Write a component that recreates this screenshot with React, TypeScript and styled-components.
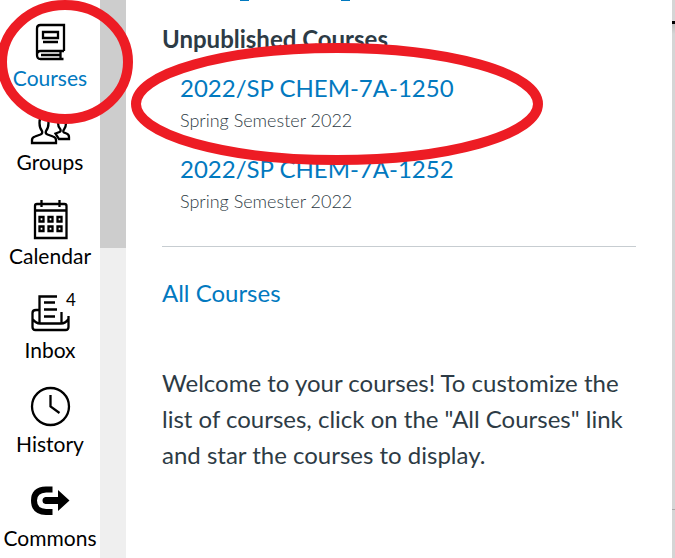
import React from "react";
import styled, { createGlobalStyle } from "styled-components";

const GlobalStyle = createGlobalStyle`
  *, *::before, *::after { box-sizing: border-box; }
  body {
    margin: 0;
    background: #fff;
    font-family: Lato, "Noto Sans", sans-serif;
    color: #2d3b45;
  }
`;

const Page = styled.div`
  position: relative;
  display: grid;
  grid-template-columns: 100px 26px minmax(0, 1fr) 3px;
  height: 100vh;
  overflow: hidden;
`;

const Nav = styled.nav`
  display: flex;
  flex-direction: column;
  gap: 25px;
  padding-top: 22px;
`;

const NavLink = styled.a<{ $active?: boolean }>`
  display: flex;
  flex-direction: column;
  align-items: center;
  gap: 5px;
  color: ${(p) => (p.$active ? "#0279bf" : "#000")};
  font-size: 21px;
  line-height: 26px;
  text-decoration: none;
  white-space: nowrap;
  margin-bottom: ${(p) => (p.$active ? "-10px" : "0")};
`;

const IconBox = styled.span`
  position: relative;
  display: flex;
  width: 40px;
  height: 38px;
  color: #000;
`;

const Badge = styled.span`
  position: absolute;
  left: 36px;
  top: -3px;
  font-size: 17px;
  line-height: 18px;
`;

const Icon = styled.svg`
  width: 40px;
  height: 38px;
  overflow: visible;
  fill: none;
  stroke: currentColor;
  stroke-width: 2.3;
`;

const Track = styled.div`
  background: #efefef;
`;

const Thumb = styled.div`
  height: 248px;
  background: #cdcdcd;
`;

const Tray = styled.main`
  padding: 0 36px;
`;

const LinkTail = styled.svg`
  display: block;
  width: 200px;
  height: 2px;
  fill: #0279bf;
`;

const Heading = styled.h2`
  margin: 19px 0 0;
  font-size: 24px;
  line-height: 36px;
  font-weight: 700;
`;

const CourseList = styled.ul`
  list-style: none;
  margin: 13px 0 0;
  padding: 0 0 0 18px;
  display: flex;
  flex-direction: column;
  gap: 17px;
`;

const TrayLink = styled.a`
  color: #0279bf;
  font-size: 24px;
  line-height: 36px;
  text-decoration: none;
`;

const CourseLink = styled(TrayLink)`
  display: block;
`;

const Term = styled.div`
  font-size: 18px;
  line-height: 28px;
  font-weight: 300;
`;

const Divider = styled.hr`
  margin: 31px 0 28px;
  border: 0;
  border-top: 1px solid #c7cdd1;
`;

const Welcome = styled.p`
  margin: 54px 0 0;
  font-size: 24px;
  line-height: 36px;
`;

const Edge = styled.div`
  display: flex;
  flex-direction: column;
  background: #d5d5d5;
`;

const EdgeBar = styled.div`
  margin-top: 21px;
  height: 3px;
  background: #000;
`;

const EdgeShade = styled.div`
  height: 10px;
  background: linear-gradient(#bcbcbc, #d5d5d5);
`;

const EdgeLine = styled.div`
  margin-top: 475px;
  height: 1px;
  background: #a8a8a8;
`;

const Marks = styled.svg`
  position: absolute;
  left: 0;
  top: 0;
  width: 600px;
  height: 180px;
  pointer-events: none;
  fill: none;
  stroke: #ed1c24;
  stroke-width: 10;
`;

const BookIcon = () => (
  <Icon viewBox="0 0 40 38" aria-hidden="true">
    <path d="M34 29V3H10.500Q7 3 7 6.500V33Q7 37 10.500 37H33.500M7 33Q7 29 10.500 29H34M30.500 29V37M11 33H30.500" />
    <path d="M13 10H28V16H13ZM13 20H28" />
  </Icon>
);

const GroupsIcon = () => (
  <Icon viewBox="0 0 40 38" aria-hidden="true">
    <path d="M2 37V34Q2 31.500 5 30.500L10.500 28.500Q13 27.500 12 25Q9.500 22 9.500 17Q9.500 10.500 14 10.500Q18.500 10.500 18.500 17Q18.500 22 16 25Q15 27.500 17.500 28.500L23 30.500Q26 31.500 26 34V37Z" />
    <path d="M29 33H39V31Q39 28.500 36.500 27.500L34 26.500Q32.500 25.500 34 23.500Q36 21 36 17Q36 11.500 32 11.500Q28 11.500 28 17Q28 21 30.500 23.500Q31 25.500 29.500 26L25.500 27.500Z" />
  </Icon>
);

const CalendarIcon = () => (
  <Icon viewBox="0 0 40 38" aria-hidden="true">
    <path d="M5 38V6Q5 4 7 4H34.500Q36.500 4 36.500 6V38ZM5 10.500H36.500M11.500 0V7M29.500 0V7" />
    <path d="M9.500 17H13.500V21.500H9.500ZM18.500 17H22.500V21.500H18.500ZM27.500 17H31.500V21.500H27.500ZM9.500 26.500H13.500V31H9.500ZM18.500 26.500H22.500V31H18.500ZM27.500 26.500H31.500V31H27.500Z" />
  </Icon>
);

const InboxIcon = () => (
  <Icon viewBox="0 0 40 38" aria-hidden="true">
    <path d="M9.500 29V2.500H27M14 8.500H25M14 15.500H27M14 22.500H25M31.500 18V29M9.500 16H6Q2.500 16 2.500 19V33Q2.500 36 5.500 36H35.500Q38.500 36 38.500 33V22M2.500 25Q6 29.500 10 29.500H31Q35.500 29.500 38.500 25" />
  </Icon>
);

const ClockIcon = () => (
  <Icon viewBox="0 0 40 38" aria-hidden="true">
    <circle cx="20.500" cy="18.500" r="18.500" />
    <path d="M20.500 7V18.500L29.500 25" />
  </Icon>
);

const CommonsIcon = () => (
  <Icon viewBox="0 0 40 38" aria-hidden="true">
    <path strokeWidth="6" d="M22.500 7.500H16Q4 8 4 18.500Q4 29.500 16 30H22.500" />
    <path stroke="none" fill="currentColor" d="M15.500 15H28V8L39.500 18.500L28 29V22H15.500Q12.500 21.500 12.500 18.500Q12.500 15.500 15.500 15Z" />
  </Icon>
);

const items = [
  { label: "Courses", icon: <BookIcon />, active: true },
  { label: "Groups", icon: <GroupsIcon /> },
  { label: "Calendar", icon: <CalendarIcon /> },
  { label: "Inbox", icon: <InboxIcon />, count: 4 },
  { label: "History", icon: <ClockIcon /> },
  { label: "Commons", icon: <CommonsIcon /> },
];

const courses = ["2022/SP CHEM-7A-1250", "2022/SP CHEM-7A-1252"];

export default function App() {
  return (
    <>
      <GlobalStyle />
      <Page>
        <Nav aria-label="Global navigation">
          {items.map((item) => (
            <NavLink key={item.label} href="#" $active={item.active}>
              <IconBox>
                {item.icon}
                {item.count && <Badge>{item.count}</Badge>}
              </IconBox>
              {item.label}
            </NavLink>
          ))}
        </Nav>
        <Track>
          <Thumb />
        </Track>
        <Tray>
          <LinkTail viewBox="0 0 200 2" aria-hidden="true">
            <path d="M78 0H87V1H78ZM179 0H188V1H179Z" />
          </LinkTail>
          <Heading>Unpublished Courses</Heading>
          <CourseList>
            {courses.map((name) => (
              <li key={name}>
                <CourseLink href="#">{name}</CourseLink>
                <Term>Spring Semester 2022</Term>
              </li>
            ))}
          </CourseList>
          <Divider />
          <TrayLink href="#">All Courses</TrayLink>
          <Welcome>
            Welcome to your courses! To customize the list of courses, click on
            the "All Courses" link and star the courses to display.
          </Welcome>
        </Tray>
        <Edge>
          <EdgeBar />
          <EdgeShade />
          <EdgeLine />
        </Edge>
        <Marks viewBox="0 0 600 180" aria-hidden="true">
          <ellipse cx="65" cy="62" rx="63" ry="57" />
          <ellipse cx="337" cy="104" rx="201" ry="56" />
        </Marks>
      </Page>
    </>
  );
}
